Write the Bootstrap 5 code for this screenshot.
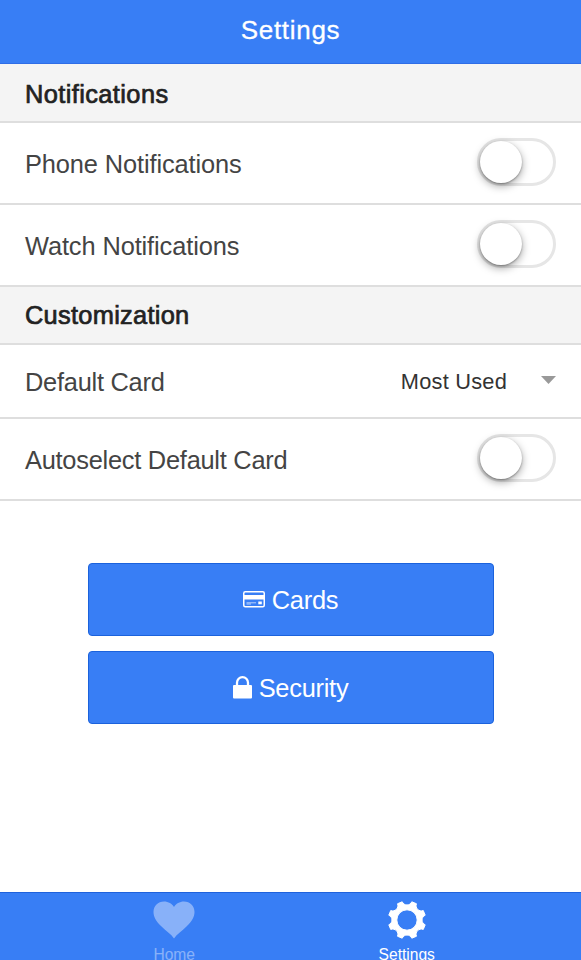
<!DOCTYPE html>
<html lang="en">
<head>
<meta charset="utf-8">
<meta name="viewport" content="width=device-width, initial-scale=1">
<title>Settings</title>
<link href="https://cdn.jsdelivr.net/npm/bootstrap@5.3.0/dist/css/bootstrap.min.css" rel="stylesheet">
<style>
  body { font-family: "Liberation Sans", Arial, sans-serif; font-size: 25.4px; line-height: 1.2; color: #444; }
  .app-screen { height: 960px; }
  .app-header { height: 64px; background: #387ef5; border-bottom: 1px solid #2f6de6; padding-bottom: 2px; }
  .app-title { font-size: 26px; -webkit-text-stroke: .3px #fff; letter-spacing: .7px; }
  .settings-row { height: 82px; padding: 0 25px; border-bottom: 2px solid #dedede; }
  .settings-row.select-row { height: 74px; }
  .settings-divider { height: 59px; padding: 3px 25px 0; background: #f4f4f4; color: #222; border-bottom: 2px solid #dedede; letter-spacing: .4px; -webkit-text-stroke: .7px #222; }
  .settings-divider.later { height: 58px; padding-top: 1px; letter-spacing: .28px; }
  .row-label { padding-top: 2px; letter-spacing: -.11px; }
  .row-label.tight { letter-spacing: -.25px; }
  .toggle-track { width: 79px; height: 48px; margin-bottom: 2px; border: 3px solid #e6e6e6; border-radius: 24px; background: #fff; }
  .toggle-knob { width: 42px; height: 42px; border-radius: 50%; background: #fff; box-shadow: 0 3px 8px rgba(0,0,0,.36), 0 1px 2px rgba(0,0,0,.3); }
  .select-value { font-size: 21.8px; color: #333; padding-top: 2px; letter-spacing: .22px; }
  .select-arrow { width: 15px; height: 8px; margin-left: 34px; margin-bottom: 3px; }
  .action-list { padding: 62px 87px 0 88px; gap: 15px; }
  .action-btn { height: 73px; font-size: 25.4px; letter-spacing: -.25px; color: #fff; background: #387ef5; border: 1px solid #1b62dc; border-radius: 4px; }
  .action-btn span { padding: 2px 1px 0 0; }
  .action-btn svg { margin: 0 7px 0 0; }
  .tab-bar { height: 68px; padding: 0 58px; background: #387ef5; border-top: 1px solid #1f62dc; }
  .tab-link { font-size: 15.6px; line-height: 18px; color: #fff; }
  .tab-link svg { flex-shrink: 0; margin: 7px 0 6px; }
  .tab-link.idle { opacity: .4; }
</style>
</head>
<body class="bg-white">
<div class="app-screen d-flex flex-column overflow-hidden">
  <header class="app-header d-flex align-items-center justify-content-center flex-shrink-0">
    <h1 class="app-title text-white fw-normal m-0">Settings</h1>
  </header>
  <main class="flex-grow-1">
    <div class="settings-divider d-flex align-items-center">Notifications</div>
    <div class="settings-row d-flex align-items-center justify-content-between">
      <span class="row-label">Phone Notifications</span>
      <div class="toggle-track" role="switch" aria-checked="false"><div class="toggle-knob"></div></div>
    </div>
    <div class="settings-row d-flex align-items-center justify-content-between">
      <span class="row-label">Watch Notifications</span>
      <div class="toggle-track" role="switch" aria-checked="false"><div class="toggle-knob"></div></div>
    </div>
    <div class="settings-divider later d-flex align-items-center">Customization</div>
    <div class="settings-row select-row d-flex align-items-center">
      <span class="row-label tight me-auto">Default Card</span>
      <span class="select-value">Most Used</span>
      <svg class="select-arrow" viewBox="0 0 15 8"><path d="M0 0H15L7.5 8Z" fill="#999"/></svg>
    </div>
    <div class="settings-row d-flex align-items-center justify-content-between">
      <span class="row-label tight">Autoselect Default Card</span>
      <div class="toggle-track" role="switch" aria-checked="false"><div class="toggle-knob"></div></div>
    </div>
    <div class="action-list d-grid">
      <button class="btn action-btn d-flex align-items-center justify-content-center p-0" type="button">
        <svg width="22" height="17" viewBox="0 0 22 17"><rect x=".75" y=".75" width="20.5" height="15" rx="1.5" fill="none" stroke="#fff" stroke-width="1.5"/><path d="M1 4H21V8.500H1Z" fill="#fff"/><path d="M3.500 11.800H13M3.500 13H8" stroke="#fff" stroke-width=".8" opacity=".8"/><rect x="15.300" y="10.500" width="3.500" height="2.800" fill="#fff"/></svg>
        <span>Cards</span>
      </button>
      <button class="btn action-btn d-flex align-items-center justify-content-center p-0" type="button">
        <svg width="19" height="23" viewBox="0 0 19 23"><rect y="9" width="19" height="13.500" rx="1" fill="#fff"/><path d="M4 10V6.700A5.500 5.500 0 0 1 15 6.700V10" fill="none" stroke="#fff" stroke-width="2.300"/></svg>
        <span>Security</span>
      </button>
    </div>
  </main>
  <nav class="tab-bar d-flex flex-shrink-0 overflow-hidden">
    <a class="tab-link idle d-flex flex-column align-items-center text-decoration-none w-50" href="#">
      <svg width="42" height="40" viewBox="0 0 42 40"><path d="M21 38.500C18 34 13 31 8 26C3 21 .5 17 .5 12C.5 6 5 1.500 11 1.500C15.500 1.500 19 3.800 21 7C23 3.800 26.500 1.500 31 1.500C37 1.500 41.500 6 41.500 12C41.500 17 39 21 34 26C29 31 24 34 21 38.500Z" fill="#fff"/></svg>
      <span>Home</span>
    </a>
    <a class="tab-link d-flex flex-column align-items-center text-decoration-none w-50" href="#">
      <svg width="40" height="40" viewBox="-20 -20 40 40"><path fill="#fff" fill-rule="evenodd" stroke="#fff" stroke-width="1" stroke-linejoin="round" d="M-4.800-18.200C-3-14 3-14 4.800-18.200L9.480-16.260C7.780-12.020 12.020-7.780 16.260-9.480L18.200-4.800C14-3 14 3 18.200 4.800L16.260 9.480C12.020 7.780 7.780 12.020 9.480 16.260L4.800 18.200C3 14-3 14-4.800 18.200L-9.480 16.260C-7.780 12.020-12.020 7.780-16.260 9.480L-18.200 4.800C-14 3-14-3-18.200-4.800L-16.260-9.480C-12.020-7.780-7.780-12.020-9.480-16.260ZM0-10.200A10.200 10.200 0 1 0 0 10.200A10.200 10.200 0 1 0 0-10.200Z"/></svg>
      <span>Settings</span>
    </a>
  </nav>
</div>
<script src="https://cdn.jsdelivr.net/npm/bootstrap@5.3.0/dist/js/bootstrap.bundle.min.js"></script>
</body>
</html>
